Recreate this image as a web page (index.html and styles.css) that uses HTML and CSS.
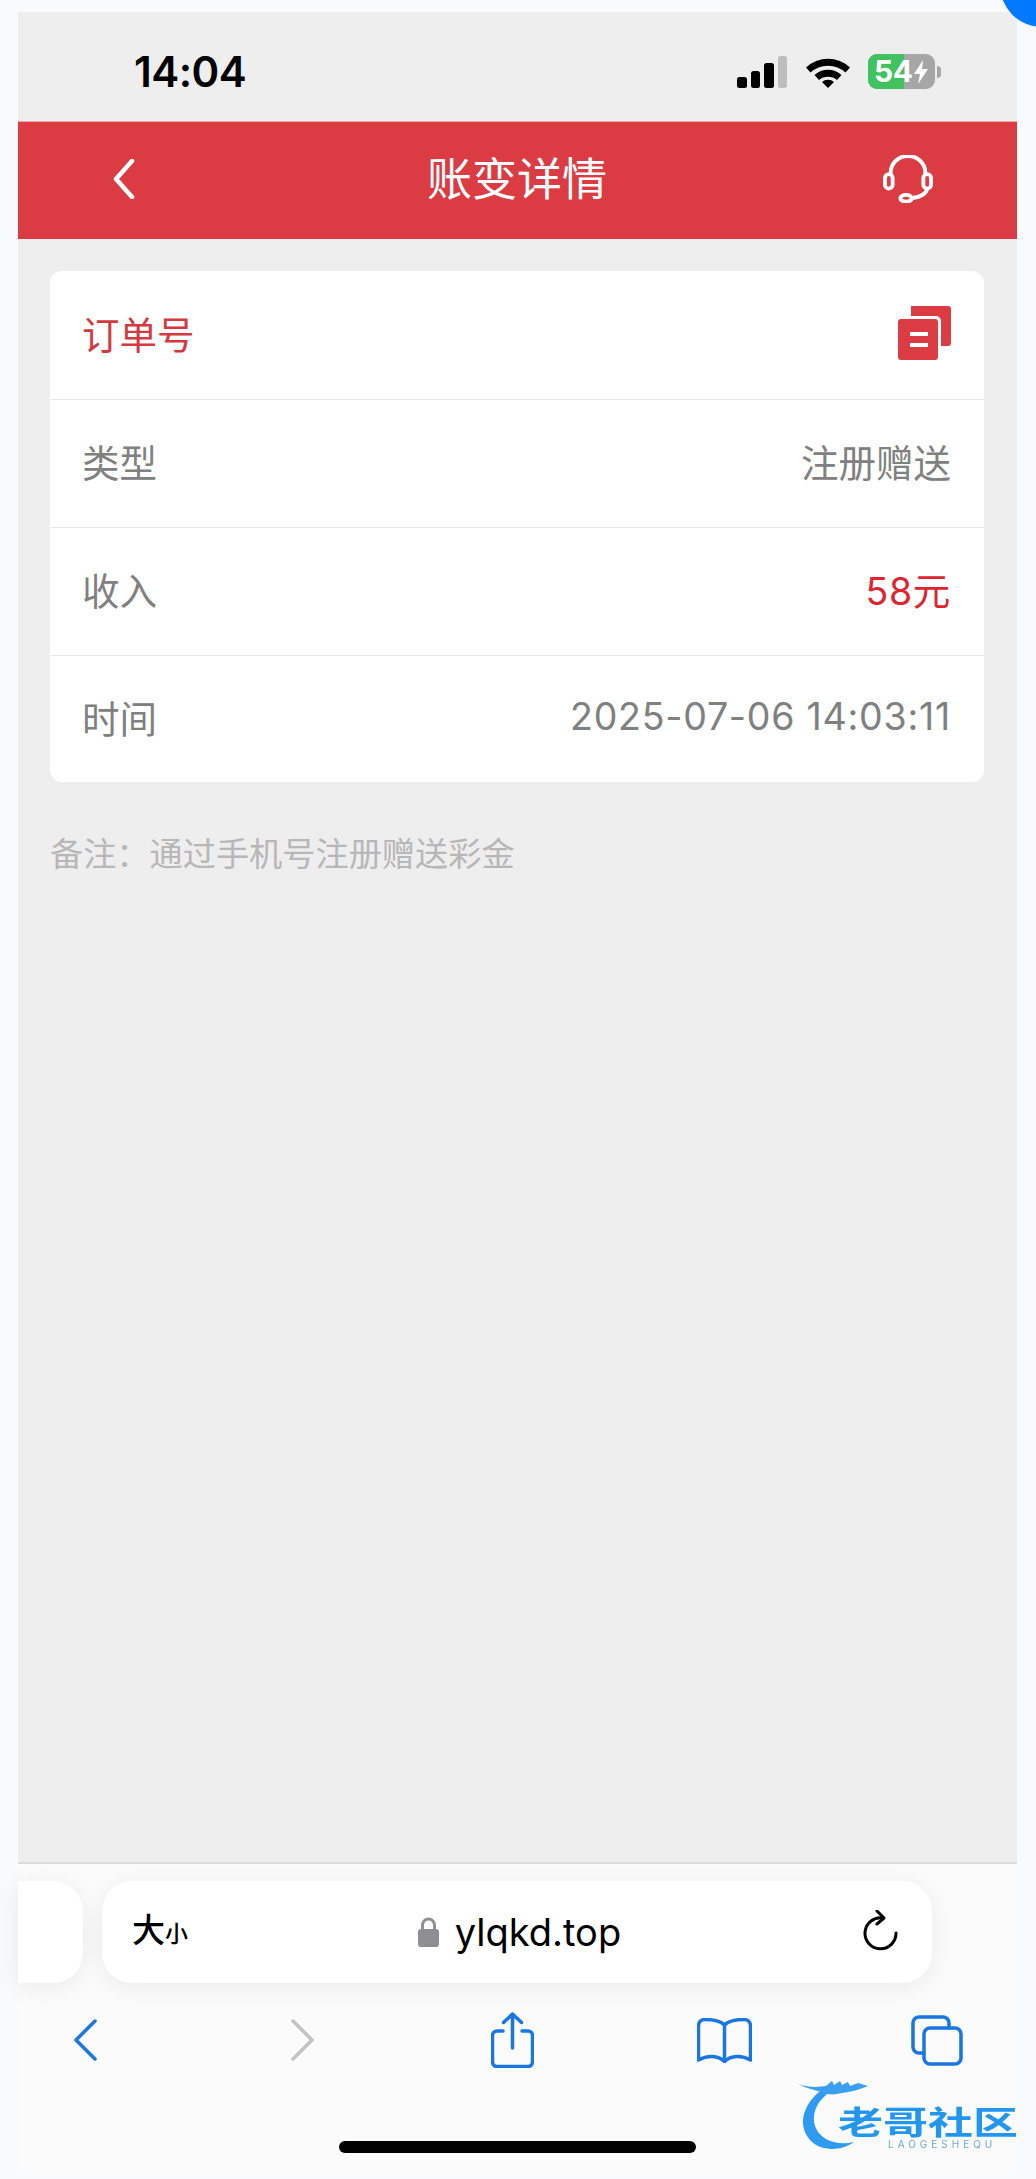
FILE: index.html
```html
<!DOCTYPE html>
<html lang="zh-CN">

<head>
    <meta charset="UTF-8">
    <meta name="viewport" content="width=device-width, initial-scale=1.0">
    <title>账变详情</title>
    <link rel="stylesheet" href="styles.css">
</head>

<body>
    <div class="corner-dot"></div>

    <div class="phone">
        <div class="status-bar">
            <span class="clock">14:04</span>
            <div class="status-icons">
                <div class="signal">
                    <i class="bar-1"></i><i class="bar-2"></i><i class="bar-3"></i><i class="bar-4"></i>
                </div>
                <svg class="wifi" viewBox="0 0 46 32">
                    <path d="M1 11.5 A32 32 0 0 1 45 11.5 L40.5 16.5 A26 26 0 0 0 5.5 16.5 Z" />
                    <path d="M9.5 20 A20 20 0 0 1 36.5 20 L32 25 A14 14 0 0 0 14 25 Z" transform="translate(0 -1)" />
                    <path d="M17 27 A9 9 0 0 1 29 27 L23 33 Z" transform="translate(0 -1)" />
                </svg>
                <div class="battery">
                    <div class="battery-body">
                        <div class="battery-fill"></div>
                        <span class="battery-num">54</span>
                        <svg class="battery-bolt" viewBox="0 0 14 24">
                            <path d="M9 0 L0 14 H6 L4 24 L14 9 H8 Z" />
                        </svg>
                    </div>
                    <div class="battery-nub"></div>
                </div>
            </div>
        </div>

        <div class="navbar">
            <svg class="nav-back" viewBox="0 0 22 40">
                <path d="M19 2 L3 20 L19 38" />
            </svg>
            <h1>账变详情</h1>
            <svg class="nav-service" viewBox="0 0 54 50">
                <path d="M9 20 V18 A18 17 0 0 1 45 18 V20" />
                <rect x="3" y="20" width="8" height="15" rx="4" />
                <rect x="43" y="20" width="8" height="15" rx="4" />
                <path d="M47 35 C46 41 38 44 31 45" />
                <ellipse cx="25" cy="45" rx="6" ry="3.5" />
            </svg>
        </div>

        <div class="main-container">
            <div class="detail-card">
                <div class="detail-row">
                    <span class="order-label">订单号</span>
                    <svg class="copy-icon" viewBox="0 0 53 54">
                        <path d="M13 0 H50 A3 3 0 0 1 53 3 V37 A3 3 0 0 1 50 40 H43 V15 A5 5 0 0 0 38 10 H13 Z" />
                        <path fill-rule="evenodd" d="M3 13 H37 A3 3 0 0 1 40 16 V51 A3 3 0 0 1 37 54 H3 A3 3 0 0 1 0 51 V16 A3 3 0 0 1 3 13 Z M12 26 V30 H30 V26 Z M12 37 V41 H30 V37 Z" />
                    </svg>
                </div>
                <div class="detail-row">
                    <span>类型</span>
                    <span>注册赠送</span>
                </div>
                <div class="detail-row">
                    <span>收入</span>
                    <span class="amount">58元</span>
                </div>
                <div class="detail-row">
                    <span>时间</span>
                    <span class="date">2025-07-06 14:03:11</span>
                </div>
            </div>
            <p class="note">备注：通过手机号注册赠送彩金</p>
        </div>

        <div class="browser-bar">
            <div class="tab-row">
                <div class="tab-stub"></div>
                <div class="url-box">
                    <span class="text-size">大<small>小</small></span>
                    <div class="url">
                        <svg class="lock" viewBox="0 0 21 30">
                            <path class="lock-loop" d="M4.5 14 V8 A6 6 0 0 1 16.5 8 V14" />
                            <rect x="0" y="12" width="21" height="18" rx="3" />
                        </svg>
                        <span>ylqkd.top</span>
                    </div>
                    <svg class="reload" viewBox="0 0 36 44">
                        <path d="M20 8 A15.5 15.5 0 1 0 33 23" />
                        <path d="M14 1 L21 8 L14 14" />
                    </svg>
                </div>
            </div>
            <div class="tool-row">
                <svg class="tool tool-back" viewBox="0 0 24 42">
                    <path d="M22 2 L3 21 L22 40" />
                </svg>
                <svg class="tool tool-forward" viewBox="0 0 24 42">
                    <path d="M2 2 L21 21 L2 40" />
                </svg>
                <svg class="tool tool-share" viewBox="0 0 43 56">
                    <path d="M12 19 H6 A4.5 4.5 0 0 0 1.5 23.5 V50 A4.5 4.5 0 0 0 6 54.5 H37 A4.5 4.5 0 0 0 41.5 50 V23.5 A4.5 4.5 0 0 0 37 19 H31" />
                    <path d="M21.5 36 V2 M12.5 10.5 L21.5 2 L30.5 10.5" />
                </svg>
                <svg class="tool tool-book" viewBox="0 0 55 45">
                    <path d="M27.5 7 C23 2.5 16 1.5 8 1.5 C4 1.5 1.5 4 1.5 8 V42 C10 37 21 37 27.5 43.5 C34 37 45 37 53.5 42 V8 C53.5 4 51 1.5 47 1.5 C39 1.5 32 2.5 27.5 7 Z" />
                    <path d="M27.5 7 V43" />
                </svg>
                <svg class="tool tool-tabs" viewBox="0 0 52 51">
                    <path d="M13 38 H8 A6 6 0 0 1 2 32 V8 A6 6 0 0 1 8 2 H32 A6 6 0 0 1 38 8 V13" />
                    <rect x="13" y="13" width="37" height="36" rx="6" />
                </svg>
            </div>
            <div class="home-bar"></div>
        </div>
    </div>

    <div class="watermark">
        <svg class="dragon" viewBox="0 0 90 72">
            <path class="dragon-body" d="M26 8 C6 22 -2 44 12 60 C22 71 42 72 56 62 C38 66 22 60 17 46 C13 33 20 20 32 12 Z" />
            <path class="dragon-head" d="M0 4 C12 8 20 7 28 6 L34 1 L36 5 L42 1 L44 5 L50 2 L52 6 L60 3 L70 6 C60 10 52 12 44 13 C36 15 30 15 24 12 C16 10 8 8 0 4 Z" />
        </svg>
        <div class="watermark-text">
            <span class="watermark-cn">老哥社区</span>
            <span class="watermark-en">LAOGESHEQU</span>
        </div>
    </div>
</body>

</html>
```

FILE: styles.css
```css
* {
    margin: 0;
    padding: 0;
    box-sizing: border-box;
}

body {
    width: 1036px;
    height: 2179px;
    overflow: hidden;
    position: relative;
    font-family: Inter, "Noto Sans CJK SC", sans-serif;
    background-color: #f8fafc;
    color: #808080;
}

.corner-dot {
    position: absolute;
    top: -57px;
    left: 1000px;
    width: 84px;
    height: 84px;
    border-radius: 50%;
    background-color: #007aff;
}

.phone {
    height: 2179px;
    padding: 12px 19px 8px 18px;
    display: flex;
    flex-direction: column;
}

/* status bar */
.status-bar {
    height: 109px;
    flex-shrink: 0;
    padding: 10px 76px 0 116px;
    display: flex;
    justify-content: space-between;
    align-items: center;
    background-color: #eeeeee;
}

.clock {
    font-size: 42px;
    font-weight: 600;
    color: #000;
    letter-spacing: -0.5px;
}

.status-icons {
    display: flex;
    align-items: center;
}

.signal {
    width: 51px;
    height: 32px;
    display: flex;
    align-items: flex-end;
    gap: 4px;
    margin-right: 17px;
}

.signal i {
    width: 9.5px;
    border-radius: 2.5px;
    background-color: #000;
}

.bar-1 { height: 11px; }
.bar-2 { height: 17px; }
.bar-3 { height: 25px; }
.signal .bar-4 { height: 32px; background-color: #bdbdbd; }

.wifi {
    width: 46px;
    height: 32px;
    margin-right: 17px;
    fill: #000;
}

.battery {
    display: flex;
    align-items: center;
    gap: 2px;
}

.battery-body {
    width: 67px;
    height: 35px;
    border-radius: 9px;
    overflow: hidden;
    position: relative;
    background-color: #a6a6a6;
    display: flex;
    align-items: center;
    padding-left: 6px;
    color: #fff;
}

.battery-fill {
    position: absolute;
    top: 0;
    bottom: 0;
    left: 0;
    width: 36px;
    background-color: #3fc25f;
}

.battery-num {
    position: relative;
    font-size: 30px;
    font-weight: 700;
    line-height: 35px;
    letter-spacing: -0.5px;
}

.battery-bolt {
    position: relative;
    width: 14px;
    height: 24px;
    margin-left: 2px;
    fill: #fff;
}

.battery-nub {
    width: 4px;
    height: 12px;
    border-radius: 0 4px 4px 0;
    background-color: #a6a6a6;
}

/* red title bar */
.navbar {
    height: 118px;
    flex-shrink: 0;
    padding: 0 83px 4px 95px;
    display: flex;
    justify-content: space-between;
    align-items: center;
    background-color: #db3c43;
    border-top: 1px solid #f0a8ab;
}

.navbar h1 {
    font-size: 45px;
    font-weight: 400;
    color: #fff;
    margin-left: 17px;
    margin-bottom: 4px;
}

.nav-back {
    width: 22px;
    height: 40px;
    fill: none;
    stroke: #fff;
    stroke-width: 4.5;
    stroke-linecap: round;
    stroke-linejoin: round;
}

.nav-service {
    width: 52px;
    height: 48px;
    fill: none;
    stroke: #fff;
    stroke-width: 4;
    stroke-linecap: round;
}

/* detail card */
.main-container {
    flex: 1;
    padding: 32px 33px 0 32px;
    background-color: #eeeeee;
}

.detail-card {
    border-radius: 12px;
    background-color: #fff;
}

.detail-row {
    height: 128px;
    padding: 0 33px 6px 32px;
    display: flex;
    justify-content: space-between;
    align-items: center;
    font-size: 37.5px;
    border-bottom: 1px solid #e8e8e8;
}

.detail-row:first-child {
    height: 129px;
}

.detail-row:last-child {
    height: 126px;
    border-bottom: none;
}

.order-label {
    color: #d4393f;
}

.copy-icon {
    width: 53px;
    height: 54px;
    margin-top: 2px;
    fill: #db3c43;
}

.amount {
    color: #e0242f;
    letter-spacing: 0.7px;
}

.date {
    letter-spacing: 0.75px;
}

.note {
    margin-top: 52px;
    font-size: 33.2px;
    line-height: 40px;
    color: #b7b7b7;
}

/* safari chrome */
.browser-bar {
    height: 309px;
    flex-shrink: 0;
    background-color: #fbfbfb;
    border-top: 2px solid #dcdcdc;
    display: flex;
    flex-direction: column;
}

.tab-row {
    height: 102px;
    margin-top: 17px;
    display: flex;
    gap: 19px;
}

.tab-stub {
    width: 65px;
    border-radius: 0 30px 30px 0;
    background-color: #fff;
    box-shadow: 0 4px 24px rgba(0, 0, 0, 0.07);
}

.url-box {
    width: 830px;
    padding: 0 33px 0 30px;
    display: flex;
    justify-content: space-between;
    align-items: center;
    border-radius: 30px;
    background-color: #fff;
    box-shadow: 0 4px 24px rgba(0, 0, 0, 0.07);
}

.text-size {
    width: 58px;
    font-size: 33px;
    font-weight: 500;
    line-height: 44px;
    white-space: nowrap;
    color: #000;
}

.text-size small {
    font-size: 23px;
    font-weight: 500;
}

.url {
    display: flex;
    align-items: center;
    gap: 16px;
    font-size: 38px;
    color: #000;
    margin-right: 14px;
}

.lock {
    width: 21px;
    height: 30px;
    fill: #8e8e93;
}

.lock-loop {
    fill: none;
    stroke: #8e8e93;
    stroke-width: 3;
}

.reload {
    width: 36px;
    height: 44px;
    fill: none;
    stroke: #000;
    stroke-width: 3;
    stroke-linecap: round;
    stroke-linejoin: round;
}

.tool-row {
    height: 56px;
    margin-top: 29px;
    padding-left: 55px;
    display: flex;
    align-items: center;
}

.tool {
    flex-shrink: 0;
    fill: none;
    stroke: #1a76e0;
    stroke-width: 3.5;
    stroke-linecap: round;
    stroke-linejoin: round;
}

.tool-back,
.tool-forward {
    width: 24px;
    height: 42px;
}

.tool-forward {
    margin-left: 194px;
    stroke: #c2c2c2;
}

.tool-share {
    width: 43px;
    height: 56px;
    margin-left: 176px;
}

.tool-book {
    width: 55px;
    height: 45px;
    margin-left: 163px;
}

.tool-tabs {
    width: 52px;
    height: 51px;
    margin-left: 159px;
}

.home-bar {
    width: 357px;
    height: 12px;
    margin: 73px auto 0;
    border-radius: 6px;
    background-color: #000;
}

/* watermark sits over the page */
.watermark {
    position: absolute;
    top: 2080px;
    left: 798px;
    width: 222px;
    height: 74px;
    filter: blur(0.6px);
}

.dragon {
    position: absolute;
    top: 0;
    left: 0;
    width: 90px;
    height: 72px;
}

.dragon-body {
    fill: #2f9bf0;
}

.dragon-head {
    fill: #3a9fee;
}

.watermark-text {
    position: absolute;
    top: 27px;
    left: 40px;
    display: flex;
    flex-direction: column;
    align-items: flex-start;
}

.watermark-cn {
    font-size: 45px;
    line-height: 30px;
    font-weight: 700;
    white-space: nowrap;
    color: #2396ee;
    transform: scaleY(0.72);
}

.watermark-en {
    margin-left: 50px;
    margin-top: 2px;
    font-size: 10px;
    line-height: 10px;
    letter-spacing: 4px;
    color: #6da9dc;
}
```
